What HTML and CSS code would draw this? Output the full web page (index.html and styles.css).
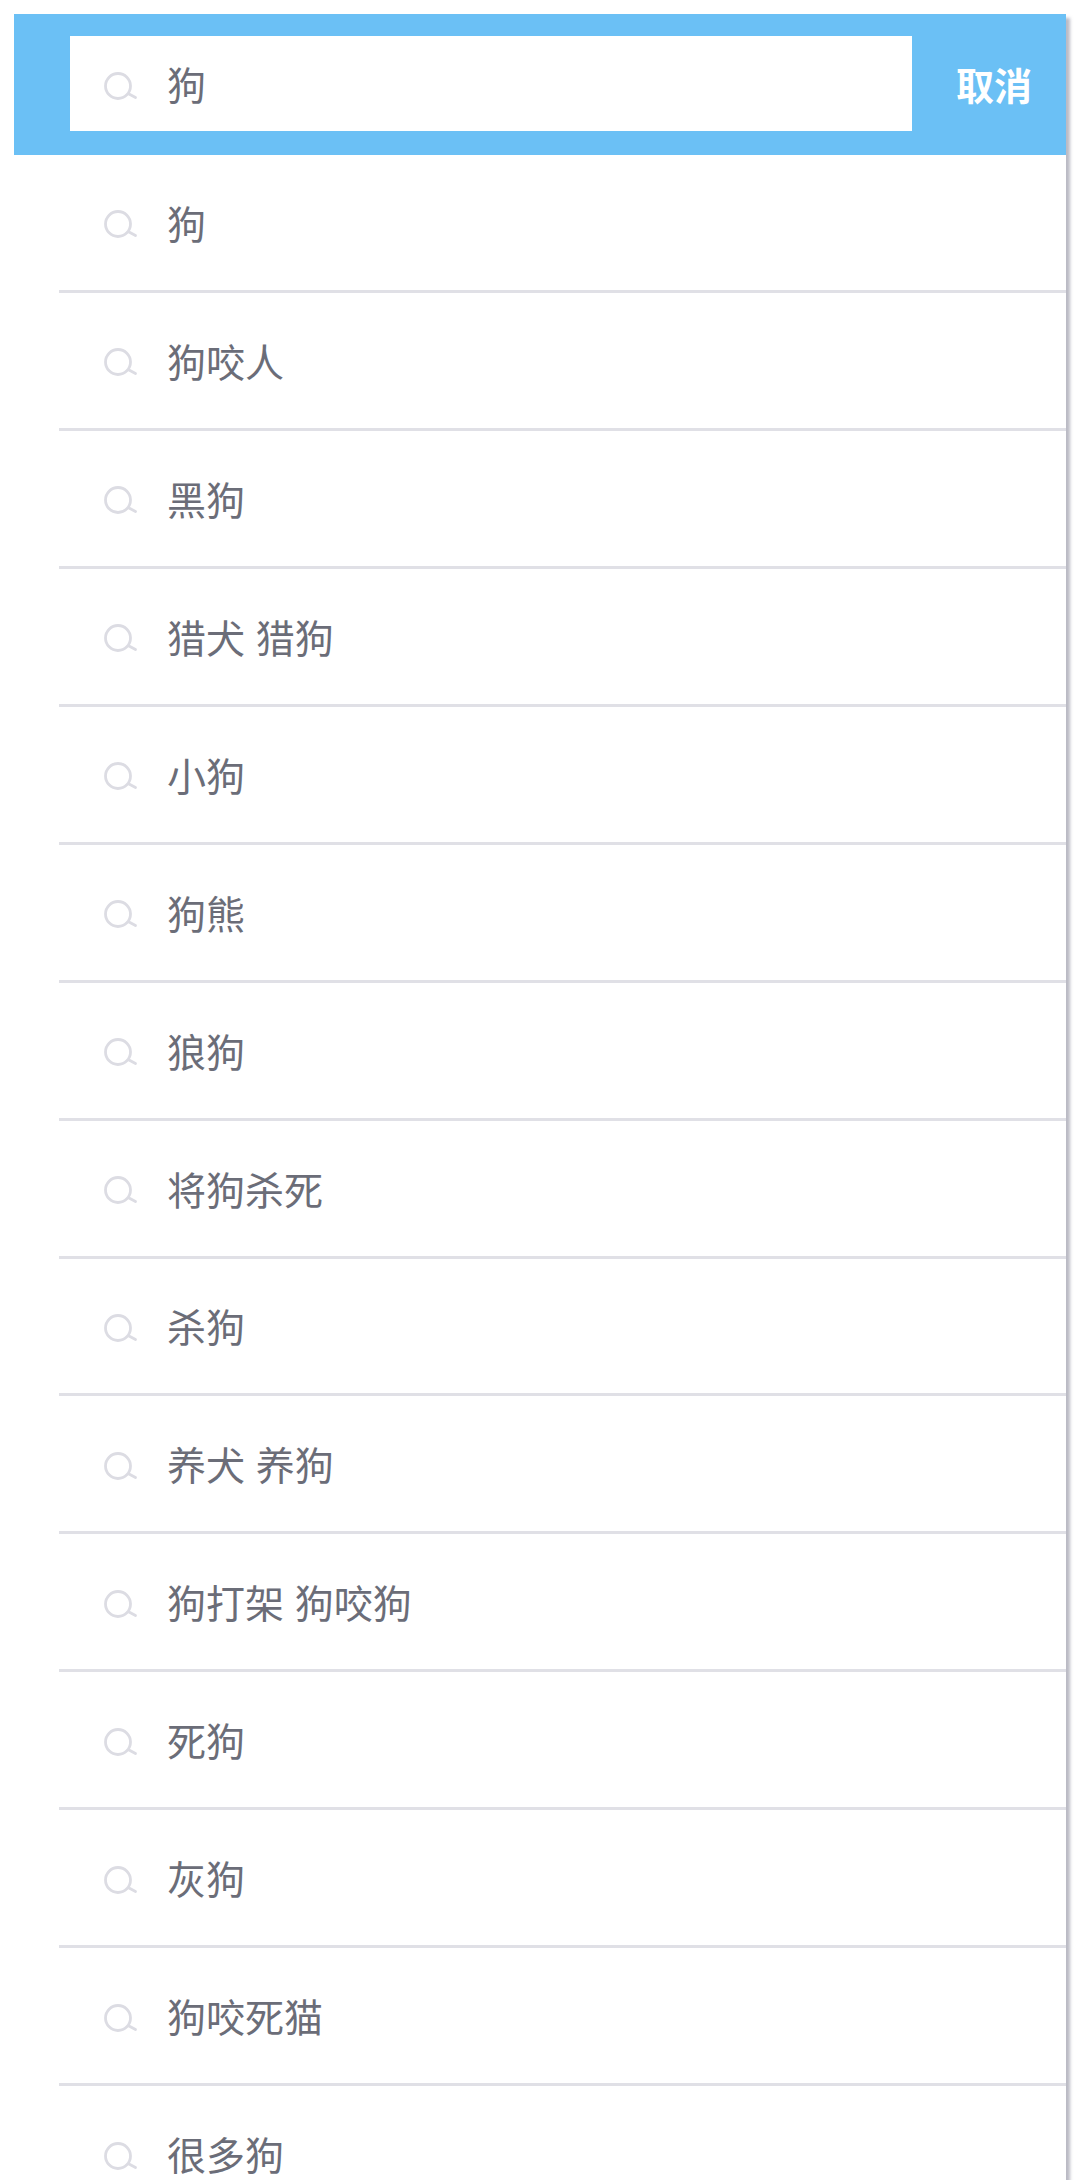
FILE: index.html
```html
<!DOCTYPE html>
<html lang="zh-CN">
<head>
    <meta charset="UTF-8">
    <meta name="viewport" content="width=device-width, initial-scale=1.0">
    <title>搜索</title>
    <link rel="stylesheet" href="styles.css">
</head>
<body>
    <svg class="icon-defs" width="0" height="0">
        <symbol id="icon-search" viewBox="0 0 34 30">
            <circle cx="14" cy="14" r="12.5" fill="none" stroke="currentColor" stroke-width="2.8"/>
            <path d="M25 22 L31.5 25.5" fill="none" stroke="currentColor" stroke-width="2.8" stroke-linecap="round"/>
        </symbol>
    </svg>
    <div id="search-panel">
        <div class="search-bar">
            <div class="search-input">
                <svg class="search-icon"><use href="#icon-search"/></svg>
                <span class="search-text">狗</span>
            </div>
            <div class="cancel-btn">取消</div>
        </div>
        <ul class="suggest-list">
            <li class="suggest-item"><svg class="search-icon"><use href="#icon-search"/></svg><span class="search-text">狗</span></li>
            <li class="suggest-item"><svg class="search-icon"><use href="#icon-search"/></svg><span class="search-text">狗咬人</span></li>
            <li class="suggest-item"><svg class="search-icon"><use href="#icon-search"/></svg><span class="search-text">黑狗</span></li>
            <li class="suggest-item"><svg class="search-icon"><use href="#icon-search"/></svg><span class="search-text">猎犬 猎狗</span></li>
            <li class="suggest-item"><svg class="search-icon"><use href="#icon-search"/></svg><span class="search-text">小狗</span></li>
            <li class="suggest-item"><svg class="search-icon"><use href="#icon-search"/></svg><span class="search-text">狗熊</span></li>
            <li class="suggest-item"><svg class="search-icon"><use href="#icon-search"/></svg><span class="search-text">狼狗</span></li>
            <li class="suggest-item"><svg class="search-icon"><use href="#icon-search"/></svg><span class="search-text">将狗杀死</span></li>
            <li class="suggest-item"><svg class="search-icon"><use href="#icon-search"/></svg><span class="search-text">杀狗</span></li>
            <li class="suggest-item"><svg class="search-icon"><use href="#icon-search"/></svg><span class="search-text">养犬 养狗</span></li>
            <li class="suggest-item"><svg class="search-icon"><use href="#icon-search"/></svg><span class="search-text">狗打架 狗咬狗</span></li>
            <li class="suggest-item"><svg class="search-icon"><use href="#icon-search"/></svg><span class="search-text">死狗</span></li>
            <li class="suggest-item"><svg class="search-icon"><use href="#icon-search"/></svg><span class="search-text">灰狗</span></li>
            <li class="suggest-item"><svg class="search-icon"><use href="#icon-search"/></svg><span class="search-text">狗咬死猫</span></li>
            <li class="suggest-item"><svg class="search-icon"><use href="#icon-search"/></svg><span class="search-text">很多狗</span></li>
        </ul>
    </div>
</body>
</html>
```

FILE: styles.css
```css
html, body {
    height: 100%;
    overflow: hidden;
}
body {
    margin: 0;
    padding: 14px 14px 0 14px;
    box-sizing: border-box;
    background-color: white;
    font-family: "Noto Sans CJK SC", sans-serif;
}
.icon-defs {
    display: block;
    height: 0;
}
#search-panel {
    background-color: white;
    box-shadow: 5px 3px 3px -1px rgba(120,120,140,0.5);
}
.search-bar {
    display: flex;
    align-items: center;
    height: 141px;
    padding-left: 56px;
    background-color: #6BC0F5;
}
.search-input {
    display: flex;
    align-items: center;
    width: 842px;
    height: 95px;
    margin-top: -2px;
    padding-left: 34px;
    box-sizing: border-box;
    background-color: white;
}
.cancel-btn {
    margin-left: 44px;
    margin-top: -2px;
    color: white;
    font-size: 38px;
    font-weight: 700;
    line-height: 1;
}
.search-icon {
    flex: none;
    width: 34px;
    height: 30px;
    margin-top: 6px;
    margin-right: 29px;
    color: #DCDCE3;
}
.search-text {
    color: #6B6D78;
    font-size: 39px;
    line-height: 1;
    word-spacing: 2px;
}
.suggest-list {
    margin: 0;
    padding: 0;
    list-style: none;
}
.suggest-item {
    display: flex;
    align-items: center;
    height: 134.95px;
    margin-left: 45px;
    padding-left: 45px;
    border-bottom: 3px solid #E0E0E6;
}
```
